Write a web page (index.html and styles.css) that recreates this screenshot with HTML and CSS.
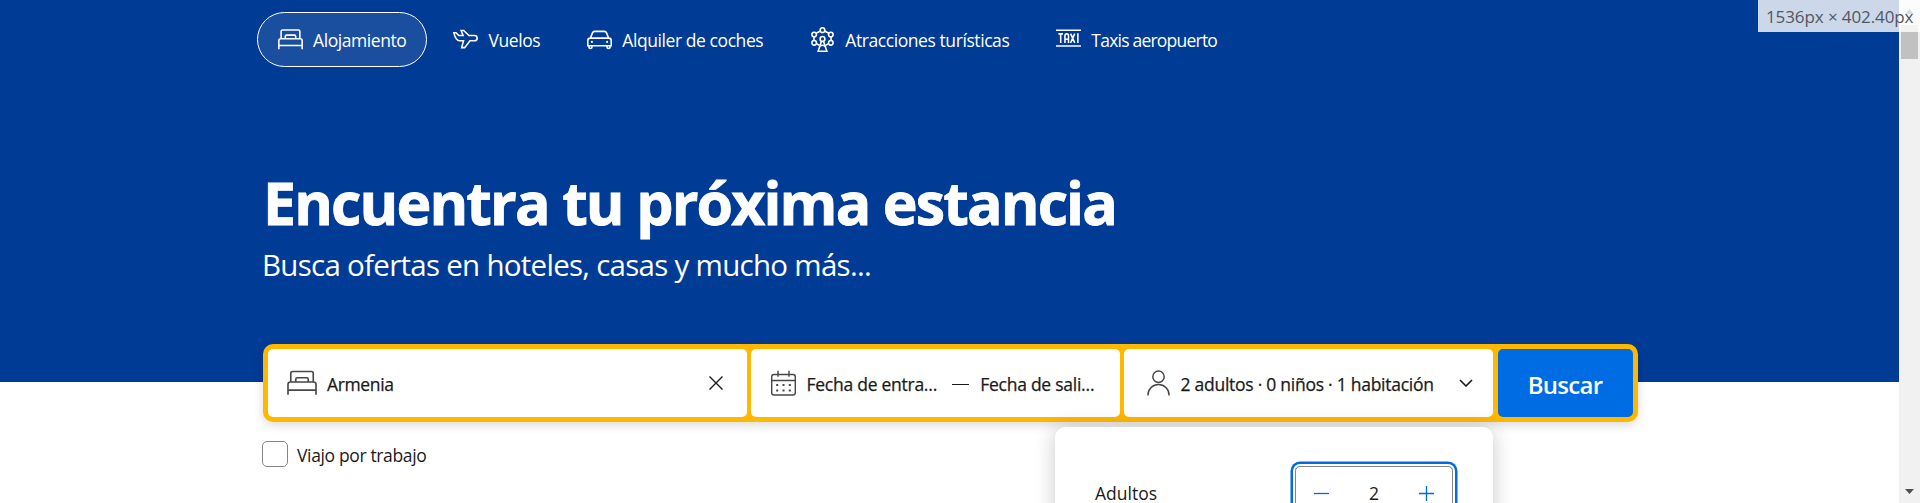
FILE: index.html
```html
<!DOCTYPE html>
<html lang="es">
<head>
<meta charset="utf-8">
<title>Encuentra tu próxima estancia</title>
<link rel="stylesheet" href="styles.css">
</head>
<body>
<div class="viewport">
  <main class="page">
    <header class="hero">
      <nav class="tabs">
        <a class="tab tab-active">
          <svg class="tab-icon" viewBox="0 0 24 24"><path d="M3 11V4.3Q3 2.8 4.5 2.8h15Q21 2.8 21 4.3V11M.8 21.3v-8.2Q.8 11.2 2.7 11.2h18.6q1.9 0 1.9 1.9v8.2M.8 17.7h22.4M7 11V9q0-1.2 1.2-1.2h7.6Q17 7.800 17 9v2"/></svg>
          <span class="t-alojamiento">Alojamiento</span>
        </a>
        <a class="tab">
          <svg class="tab-icon" viewBox="0 0 24 24"><path d="M.8 5.500h2.100l2.600 2.700h4.200L7.800 3.300h2.500l5 4.900h5.200c3.600 0 3.600 5 0 5h-4.200l-5.100 6.600H8.300l1.800-6.600H6.300C3.500 13.200 1.900 10 .8 5.500z"/></svg>
          <span class="t-vuelos">Vuelos</span>
        </a>
        <a class="tab">
          <svg class="tab-icon" viewBox="0 0 24 24"><path d="M3.200 10.700 5.400 5.400Q5.900 4.200 7.200 4.200h9.600q1.300 0 1.800 1.200l2.200 5.300M3 10.700h18q2.200 0 2.200 2.200V18H.8v-5.100Q.8 10.700 3 10.700zM1.800 18v1.200a1.500 1.500 0 0 0 3 0V18M19.200 18v1.200a1.500 1.500 0 0 0 3 0V18"/><path class="solid" d="M3.700 14.300a1 1 0 1 0 2 0 1 1 0 1 0-2 0M18.300 14.300a1 1 0 1 0 2 0 1 1 0 1 0-2 0"/></svg>
          <span class="t-coches">Alquiler de coches</span>
        </a>
        <a class="tab">
          <svg class="tab-icon" viewBox="0 0 24 24"><circle cx="12" cy="3" r="2.200"/><circle cx="4" cy="7.200" r="2.200"/><circle cx="20" cy="7.200" r="2.200"/><circle cx="4" cy="15.200" r="2.200"/><circle cx="20" cy="15.200" r="2.200"/><circle cx="12" cy="11.500" r="2.300"/><path d="M9.900 3.800 6 6M14.100 3.800 18 6M3.800 9.500v3.500M20.200 9.500v3.500M6.200 16 8.800 17.500M17.800 16l-2.600 1.500M11 13.700 7.800 23.200h8.400L13 13.700M9.500 18.500q2.500-2 5 0"/></svg>
          <span class="t-atracciones">Atracciones turísticas</span>
        </a>
        <a class="tab">
          <svg class="tab-icon" viewBox="0 0 24 24"><path d="M0 3.200h24M0 18.200h24M2.300 6.600h4.400M4.500 6.600v8.700M8.600 15.300V8.500q0-1.900 1.700-1.900T12 8.500v6.800M8.600 11.800H12M14 6.300l4 9M18 6.300l-4 9M21 6v9.300"/></svg>
          <span class="t-taxis">Taxis aeropuerto</span>
        </a>
      </nav>
      <h1 class="title">Encuentra tu próxima estancia</h1>
      <p class="subtitle">Busca ofertas en hoteles, casas y mucho más...</p>
    </header>

    <form class="search">
      <div class="field field-place">
        <svg class="field-icon" viewBox="0 0 24 24"><path d="M3 11V4.300Q3 2.800 4.500 2.800h15Q21 2.800 21 4.300V11M.8 21.300v-8.200Q.8 11.200 2.700 11.200h18.600q1.900 0 1.900 1.900v8.200M.8 17.700h22.400M7 11V9q0-1.200 1.200-1.200h7.600Q17 7.800 17 9v2"/></svg>
        <span class="t-armenia grow">Armenia</span>
        <svg class="clear-icon" viewBox="0 0 14 14"><path d="M.5.5l13 13M13.500.5l-13 13"/></svg>
      </div>
      <div class="field field-dates">
        <svg class="cal-icon" viewBox="0 0 25 26"><path d="M3 4.500h19q2.300 0 2.300 2.300v15.900q0 2.300-2.300 2.300H3Q.7 25 .7 22.700V6.800Q.7 4.500 3 4.500zM.7 10.500h23.600M7 .7v6M18 .7v6"/><path class="solid" d="M5.200 14h2v2h-2zM11.500 14h2v2h-2zM17.800 14h2v2h-2zM5.200 19.500h2v2h-2zM11.500 19.500h2v2h-2zM17.800 19.500h2v2h-2z"/></svg>
        <span>Fecha de entra…</span>
        <span class="dash"></span>
        <span>Fecha de sali…</span>
      </div>
      <div class="field field-guests">
        <svg class="person-icon" viewBox="0 0 23 26"><circle cx="11.500" cy="6.800" r="5.700"/><path d="M1 25.500v-.8a10.500 10.300 0 0 1 21 0v.8"/></svg>
        <span class="grow">2 adultos · 0 niños · 1 habitación</span>
        <svg class="chevron" viewBox="0 0 14 8"><path d="M1 1l6 6 6-6"/></svg>
      </div>
      <button class="submit" type="button">Buscar</button>
      <div class="popup">
        <span class="t-adultos">Adultos</span>
        <div class="stepper">
          <svg class="step-icon" viewBox="0 0 15 15"><path d="M0 7.500h15"/></svg>
          <span>2</span>
          <svg class="step-icon" viewBox="0 0 15 15"><path d="M0 7.500h15M7.500 0v15"/></svg>
        </div>
      </div>
    </form>

    <label class="work"><span class="checkbox"></span><span class="t-viajo">Viajo por trabajo</span></label>
  </main>
  <aside class="scrollbar">
    <svg class="arrow arrow-up" viewBox="0 0 9 5"><path d="M0 5 4.500 0 9 5z"/></svg>
    <div class="thumb"></div>
    <svg class="arrow arrow-down" viewBox="0 0 9 5"><path d="M0 0h9L4.500 5z"/></svg>
  </aside>
  <div class="size-badge">1536px × 402.40px</div>
</div>
</body>
</html>
```
FILE: styles.css
```css
* { box-sizing: border-box; }
body {
  margin: 0;
  overflow: hidden;
  background: #fff;
  color: #1a1a1a;
  font-family: "Open Sans", "Noto Sans", sans-serif;
  font-size: 17.5px;
}
span { white-space: nowrap; }
svg { fill: none; stroke: currentColor; flex: none; }
.solid { fill: currentColor; stroke: none; }
.grow { flex: 1; }
.viewport { position: relative; display: flex; width: 1920px; height: 503px; overflow: hidden; }
.page { flex: 1; min-width: 0; }

.hero { height: 382px; padding: 12px 0 0 257px; background: #003b95; color: #fff; }
.tabs { display: flex; gap: 5px; height: 55px; letter-spacing: -0.42px; }
.tab { display: flex; align-items: center; gap: 10px; padding: 0 20px; border: 1px solid transparent; border-radius: 28px; }
.tab-active { background: rgba(255, 255, 255, 0.1); border-color: #fff; }
.tab-icon { width: 25px; height: 25px; stroke-width: 1.5; }
.t-taxis { letter-spacing: -0.78px; }
.title { margin: 96px 0 0 6px; font-size: 59px; line-height: 78px; font-weight: 700; letter-spacing: -1.88px; -webkit-text-stroke: 0.8px #fff; }
.subtitle { margin: 4px 0 0 5px; font-size: 29.500px; line-height: 40px; letter-spacing: -0.72px; }

.search {
  position: relative;
  display: grid;
  grid-template-columns: 479px 368.500px 369px 135px;
  gap: 4.500px;
  width: 1375px;
  height: 78px;
  margin: -38px 0 0 262.500px;
  padding: 5px;
  border-radius: 10px;
  background: #ffb700;
  box-shadow: 0 2.500px 10px rgba(26, 26, 26, 0.16);
}
.field { display: flex; align-items: center; border-radius: 5px; background: #fff; letter-spacing: -0.26px; }
.field > span:not(.dash) { padding-top: 2px; -webkit-text-stroke: 0.25px #1a1a1a; }
.field-place { padding: 0 24px 0 19.500px; gap: 10px; }
.field-dates { padding-left: 19.500px; }
.field-guests { padding: 0 20.500px 0 22.500px; gap: 11px; }
.field svg { color: #474747; }
.t-armenia { letter-spacing: -0.35px; }
.field-icon { width: 30px; height: 30px; stroke-width: 1.300; }
.field .clear-icon { width: 14px; height: 14px; stroke-width: 1.400; color: #1a1a1a; }
.cal-icon { width: 25px; height: 26px; margin-right: 11px; stroke-width: 1.400; }
.dash { width: 17px; height: 1px; margin: 2px 11px 0 15px; background: #1a1a1a; }
.person-icon { width: 23px; height: 26px; stroke-width: 1.500; }
.field .chevron { width: 14px; height: 8px; stroke-width: 1.600; color: #1a1a1a; }
.submit { padding: 3px 0 0; border: 0; border-radius: 5px; background: #006ce4; color: #fff; font: 600 24px/1 "Open Sans", "Noto Sans", sans-serif; letter-spacing: -0.7px; }

.popup {
  position: absolute;
  left: 792px;
  top: 83px;
  display: flex;
  justify-content: space-between;
  width: 438px;
  height: 160px;
  padding: 39px 39.500px 0 40.500px;
  border-radius: 10px;
  background: #fff;
  box-shadow: 0 2.500px 20px rgba(26, 26, 26, 0.24);
  line-height: 55px;
}
.stepper {
  display: flex;
  align-items: center;
  justify-content: space-between;
  width: 158px;
  height: 55px;
  padding: 0 18px;
  border: 1px solid #868686;
  border-radius: 5px;
  box-shadow: 0 0 0 2px #fff, 0 0 0 4.500px #006ce4;
}
.step-icon { width: 15px; height: 15px; color: #006ce4; stroke-width: 1.300; }

.work { display: flex; align-items: center; gap: 9px; width: 200px; margin: 19px 0 0 262px; letter-spacing: -0.36px; }
.t-viajo { padding-top: 2px; }
.checkbox { width: 26px; height: 26px; border: 1px solid #868686; border-radius: 5px; }

.scrollbar { display: flex; flex-direction: column; align-items: center; width: 21px; background: #f1f1f1; }
.arrow { width: 9px; height: 5px; fill: #505050; stroke: none; }
.arrow-up { margin-top: 9px; }
.thumb { width: 17px; height: 34px; margin-top: 11px; background: #c1c1c1; }
.arrow-down { margin: auto 0 9px; }
.size-badge { position: absolute; right: 0; top: 0; width: 162px; height: 32px; padding-left: 8px; background: rgba(255, 255, 255, 0.8); color: #505860; font-size: 17px; line-height: 33px; letter-spacing: -0.1px; white-space: nowrap; }
```
